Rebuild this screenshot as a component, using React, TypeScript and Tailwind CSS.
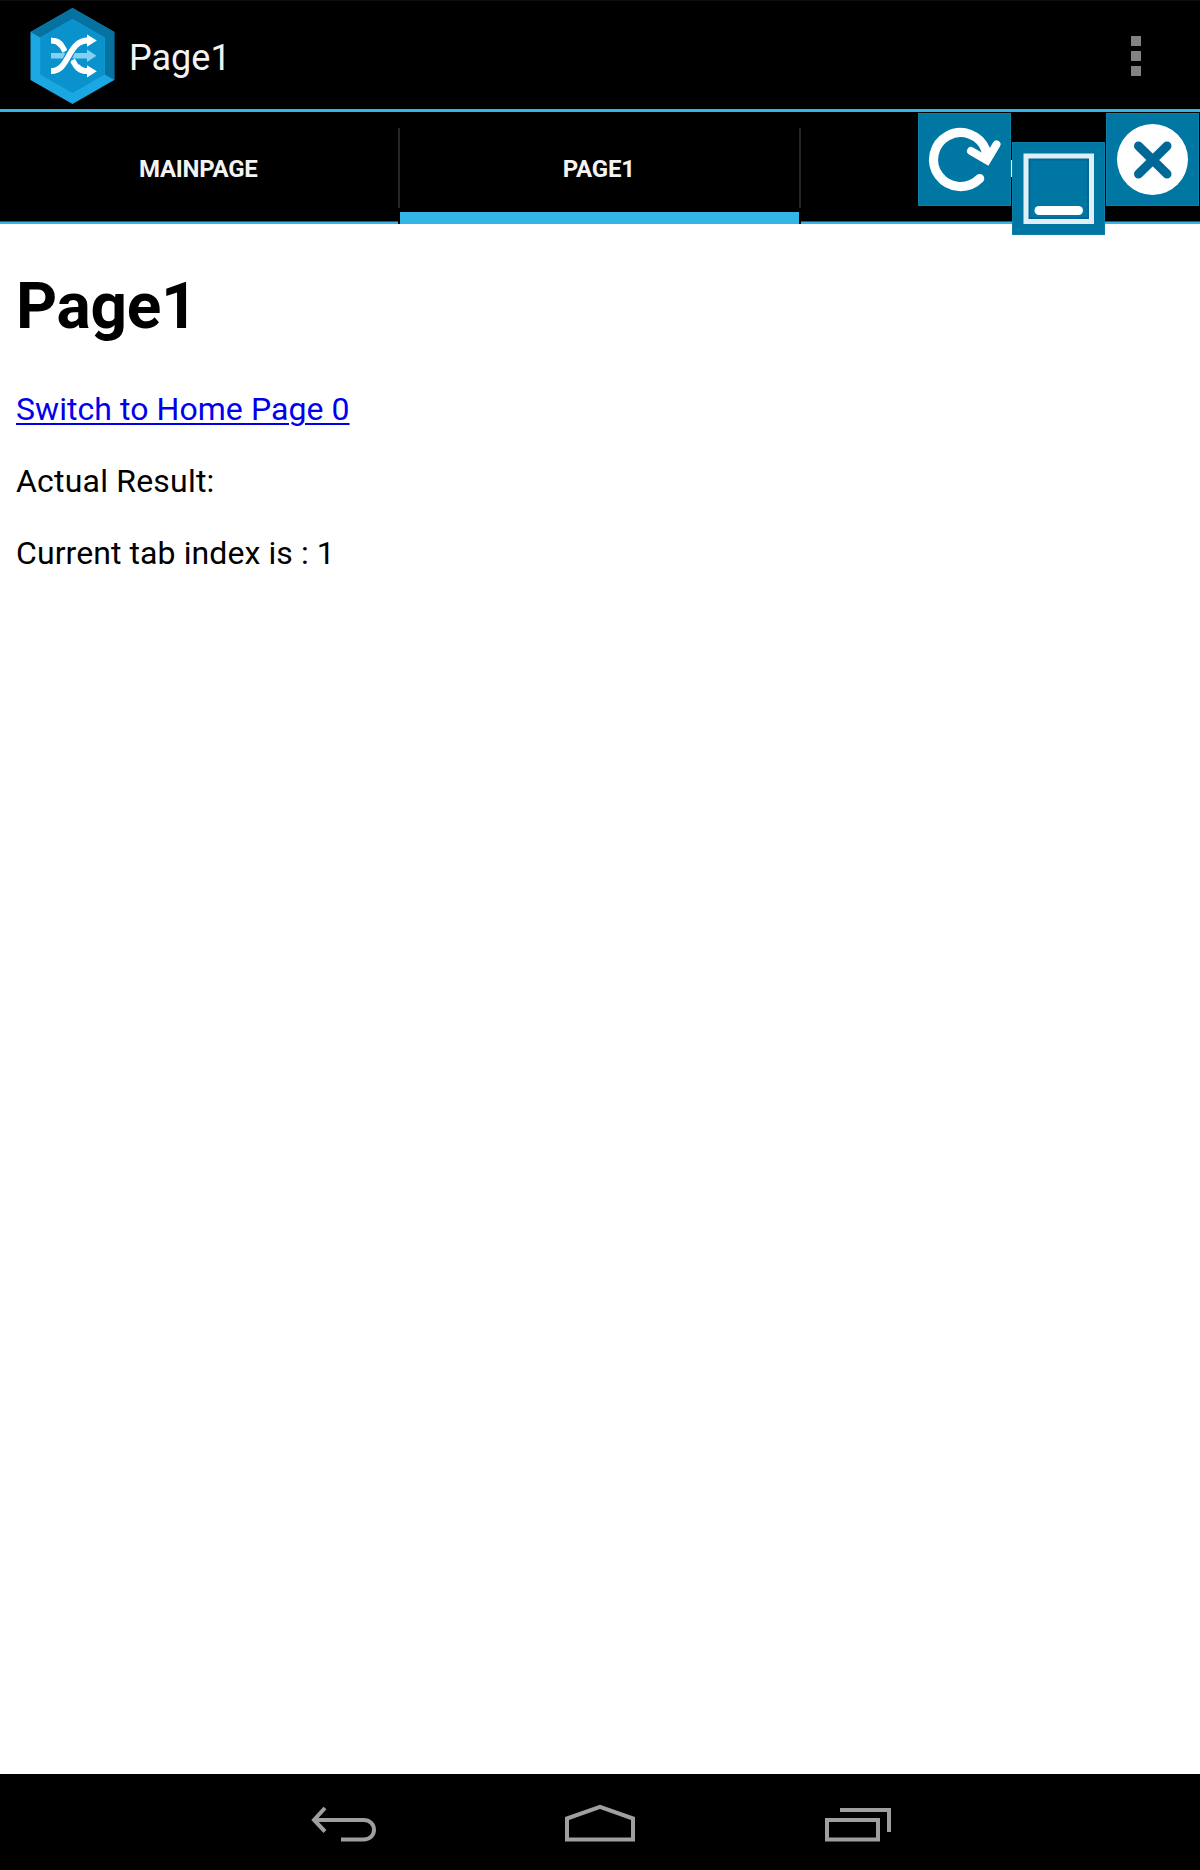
import type { ReactNode } from 'react';

function Logo() {
  return (
    <svg width="85" height="96" viewBox="30 8 85 96" className="block translate-y-px">
      <path d="M72.5 8 114.3 32V80L72.5 104 30.5 80V32Z" fill="#1ba8e2" />
      <path d="M30.5 32 72.5 8 114.3 32V80L104.7 74.5V37.5L72.5 19 40.2 37.5Z" fill="#0672a0" />
      <path d="M72.5 19 104.7 37.5V74.5L72.5 93 40.2 74.5V37.5Z" fill="#0a92cd" />
      <path d="M51 53H87V49.5L96.5 55.7 87 62V58.5H51Z" fill="#84d0f2" />
      <g fill="none" stroke="#fff" strokeWidth="5.6">
        <path d="M51 40.5C60 40.5 61.5 45 65 51.5" />
        <path d="M72.5 60C76.5 68 79 71.2 88 71.2" />
      </g>
      <path d="M54 71.2C70 71.2 67 40.5 85 40.5" fill="none" stroke="#0a92cd" strokeWidth="8.5" />
      <path d="M51 40.5C57 40.5 59.5 43 61.5 46M77 66C79.500 69.500 82 71.200 88 71.200" fill="none" stroke="#fff" strokeWidth="5.6" />
      <path d="M51 71.2C70 71.2 67 40.5 88 40.5" fill="none" stroke="#fff" strokeWidth="5.8" />
      <path d="M87 34.5 96.8 40.5 87 46.8ZM87 65.2 96.8 71.3 87 77.5Z" fill="#fff" />
    </svg>
  );
}

function RefreshIcon() {
  return (
    <svg width="93" height="93" viewBox="0 0 93 93" fill="none" stroke="#fff" strokeLinecap="round">
      <path d="M61.7 65.6A27 27 0 1 1 67.8 37L68.5 45" strokeWidth="9.2" />
      <path d="M53 38 69 47.300 78.500 31.5" strokeWidth="8" />
    </svg>
  );
}

function WindowIcon() {
  return (
    <svg width="93" height="93" viewBox="0 0 93 93" fill="none">
      <rect x="16.5" y="16.5" width="60.5" height="60.5" stroke="#005f94" strokeWidth="4" opacity=".7" />
      <rect x="14" y="14" width="65.5" height="65.5" stroke="#e0eff5" strokeWidth="5" />
      <path d="M27 68.5H66.5" stroke="#fff" strokeWidth="9" strokeLinecap="round" />
    </svg>
  );
}

function CloseIcon() {
  return (
    <svg width="93" height="93" viewBox="0 0 93 93" fill="none">
      <circle cx="46.5" cy="46.5" r="35.5" fill="#fff" />
      <path d="M32.5 33 61 61M61 33 32.5 61" stroke="#006897" strokeWidth="9" strokeLinecap="round" />
    </svg>
  );
}

function Tab({ label, selected = false }: { label: string; selected?: boolean }) {
  return (
    <div className="relative flex items-center justify-center pt-px text-[24px] font-bold tracking-[-0.25px] text-[#f3f3f3]">
      <span className="pr-[1.5px]">{label}</span>
      <div className={selected ? 'absolute bottom-0 h-3 w-full bg-[#33b5e5]' : 'absolute bottom-0 h-[3px] w-full border-t border-[#1b617b] bg-[#33b5e5]'} />
    </div>
  );
}

function Divider() {
  return <div className="mt-4 h-20 bg-[#262626]" />;
}

function FloatButton({ label, lowered = false, children }: { label: string; lowered?: boolean; children: ReactNode }) {
  return (
    <button
      aria-label={label}
      className={lowered ? 'mt-[29px] size-[93px] bg-[#0077a2] ring-1 ring-inset ring-[#107fa8]' : 'size-[93px] bg-[#0077a2] ring-1 ring-inset ring-[#107fa8]'}
    >
      {children}
    </button>
  );
}

export default function App() {
  return (
    <div className="relative flex h-[1870px] w-[1200px] flex-col overflow-hidden bg-white font-['Roboto',sans-serif]">
      <header className="flex h-[112px] shrink-0 items-center border-t border-b-[3px] border-t-[#0e0e0e] border-b-[#33b5e5] bg-black pl-[30px]">
        <Logo />
        <h1 className="ml-[14px] pt-[6px] text-[36px] leading-none text-[#f3f3f3]">Page1</h1>
        <div className="mt-[2px] mr-[59px] ml-auto flex flex-col gap-[5px]">
          <i className="size-[10px] bg-[#838383]" />
          <i className="size-[10px] bg-[#838383]" />
          <i className="size-[10px] bg-[#838383]" />
        </div>
      </header>
      <nav className="grid h-[112px] shrink-0 grid-cols-[398px_2px_399px_2px_399px] bg-black">
        <Tab label="MAINPAGE" />
        <Divider />
        <Tab label="PAGE1" selected />
        <Divider />
        <Tab label="PAGE2" />
      </nav>
      <div className="absolute top-[113px] right-px flex items-start gap-px">
        <FloatButton label="Refresh"><RefreshIcon /></FloatButton>
        <FloatButton label="Minimize" lowered><WindowIcon /></FloatButton>
        <FloatButton label="Close"><CloseIcon /></FloatButton>
      </div>
      <main className="flex flex-1 flex-col items-start px-4 pt-[45px] text-black">
        <h2 className="text-[64px] leading-[76px] font-bold tracking-[-0.3px]">Page1</h2>
        <a href="#" className="mt-[45px] text-[32px] leading-[38px] tracking-[0.06px] text-[#0000ee] underline decoration-2 underline-offset-[3px]">Switch to Home Page 0</a>
        <p className="mt-[34px] text-[32px] leading-[38px] tracking-[0.2px]">Actual Result:</p>
        <p className="mt-[34px] text-[32px] leading-[38px] tracking-[0.08px]">Current tab index is : 1</p>
      </main>
      <footer className="h-24 shrink-0 bg-black">
        <svg width="1200" height="96" viewBox="0 1774 1200 96" fill="none" stroke="#9f9f9f" strokeWidth="4">
          <path d="M341 1839.5H363.5C370 1839.5 374 1835 374 1829.7S370 1820 363.5 1820H316" />
          <path d="M325 1808 314 1820 325 1831.5" />
          <path d="M567 1839.5V1818.5L600 1806.8 633 1818.5V1839.5Z" />
          <path d="M827 1820H878V1839.5H827ZM840 1810H889V1832" />
        </svg>
      </footer>
    </div>
  );
}
